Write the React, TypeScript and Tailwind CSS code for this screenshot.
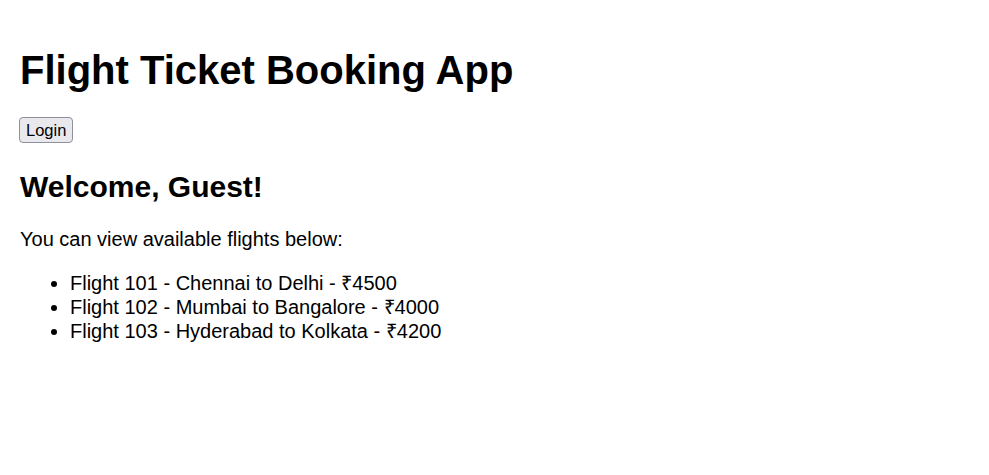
import React from 'react';

const flights = [
  { id: 101, from: 'Chennai', to: 'Delhi', price: 4500 },
  { id: 102, from: 'Mumbai', to: 'Bangalore', price: 4000 },
  { id: 103, from: 'Hyderabad', to: 'Kolkata', price: 4200 },
];

const App: React.FC = () => {
  return (
    <div className="min-h-screen bg-white px-[20px] pt-[20px] text-black text-[20px] leading-[24px] font-['Liberation_Sans',Arial,sans-serif]">
      <h1 className="mt-[27px] mb-[24px] text-[40px] font-bold leading-[46px]">Flight Ticket Booking App</h1>
      <button className="-ml-px h-[26px] px-[6px] text-[16.5px] leading-[20px] bg-[#e9e9ed] border border-[#8f8f9d] rounded-[4px]">
        Login
      </button>
      <h2 className="mt-[26px] mb-[23px] text-[30px] font-bold leading-[35px]">Welcome, Guest!</h2>
      <p className="mb-[20px]">You can view available flights below:</p>
      <ul className="list-disc pl-[50px]">
        {flights.map((f) => (
          <li key={f.id}>
            Flight {f.id} - {f.from} to {f.to} - ₹{f.price}
          </li>
        ))}
      </ul>
    </div>
  );
};

export default App;
